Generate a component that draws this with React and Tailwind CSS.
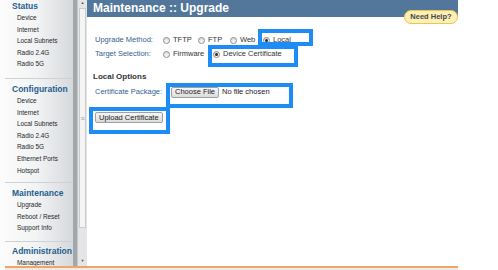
import React from 'react';

const sections = [
  { title: 'Status', items: ['Device', 'Internet', 'Local Subnets', 'Radio 2.4G', 'Radio 5G'], pt: 'pt-0', pb: 'pb-[8px] border-b' },
  { title: 'Configuration', items: ['Device', 'Internet', 'Local Subnets', 'Radio 2.4G', 'Radio 5G', 'Ethernet Ports', 'Hotspot'], pt: 'pt-[4px]', pb: 'pb-[6px] border-b' },
  { title: 'Maintenance', items: ['Upgrade', 'Reboot / Reset', 'Support Info'], pt: 'pt-[4px]', pb: 'pb-[7px] border-b' },
  { title: 'Administration', items: ['Management'], pt: 'pt-[3px]', pb: 'pb-0' },
];

const Radio = ({ checked }) => (
  <span className="flex items-center justify-center w-[7px] h-[7px] rounded-full border border-[#8c8c8c] bg-linear-to-b from-[#d8d8d8] to-white shrink-0">
    {checked && <span className="w-[3px] h-[3px] rounded-full bg-[#2a2a2a]" />}
  </span>
);

const Option = ({ label, checked, width }) => (
  <span className={`flex items-center gap-[3px] ${width}`}>
    <Radio checked={checked} />
    <span>{label}</span>
  </span>
);

const Button = ({ children }) => (
  <span className="flex items-center h-[11px] px-[3px] rounded-[2px] border border-[#a0a0a0] bg-linear-to-b from-[#f6f6f6] to-[#dcdcdc] text-[#222] text-[7.5px] leading-none">
    {children}
  </span>
);

const Sidebar = () => (
  <div className="w-[73px] h-full overflow-hidden bg-linear-to-r from-[#fcfcfc] via-[#f2f3f4] to-[#d6d9dc]">
    {sections.map((s) => (
      <div key={s.title} className={`${s.pt} ${s.pb} ml-[5px] border-[#cfd2d5]`}>
        <div className="h-[12px] leading-[12px] pl-[7px] text-[8.5px] font-bold text-[#1f5e8e]">{s.title}</div>
        {s.items.map((it) => (
          <div key={it} className="h-[11.6px] leading-[11.6px] pl-[12px] text-[6.4px] text-[#262626] font-medium whitespace-nowrap">
            {it}
          </div>
        ))}
      </div>
    ))}
  </div>
);

const Scrollbar = () => (
  <div className="flex h-full">
    <div className="w-[4px] h-full bg-[#a3a7ab]" />
    <div className="relative w-[10px] h-full bg-[#e4e5e6] border-l border-[#c4c6c8]">
      <div className="flex justify-center pt-[1px] text-[4px] text-[#555] leading-none">▲</div>
      <div className="absolute left-[1px] right-[1px] top-[8px] h-[220px] bg-[#f4f4f4] border border-[#c9cbcd] flex items-center justify-center">
        <span className="text-[7px] text-[#999] leading-none">≡</span>
      </div>
      <div className="absolute bottom-[3px] left-0 right-0 flex justify-center text-[4px] text-[#555] leading-none">▼</div>
    </div>
  </div>
);

const Highlight = ({ className }) => (
  <div className={`absolute border-[4px] border-[#1e8cf5] ${className}`} />
);

const Main = () => (
  <div className="relative flex-1 h-full bg-white">
    <div className="h-[17px] bg-[#53779a] pl-[6px] text-white font-bold text-[12px] leading-[17px]">
      Maintenance :: Upgrade
    </div>
    <div className="absolute right-0 top-[10px] w-[54px] h-[14px] rounded-full bg-[#fdf0b6] border border-[#efc54c] flex items-center justify-center text-[7.5px] font-bold text-[#444]">
      Need Help?
    </div>

    <div className="pl-[8px] pt-[16px] text-[7.5px]">
      <div className="flex items-center h-[14px]">
        <span className="w-[68px] text-[#33628f]">Upgrade Method:</span>
        <div className="flex items-center text-[#333]">
          <Option label="TFTP" width="w-[35px]" />
          <Option label="FTP" width="w-[32px]" />
          <Option label="Web" width="w-[33px]" />
          <Option label="Local" checked />
        </div>
      </div>
      <div className="flex items-center h-[14px]">
        <span className="w-[68px] text-[#33628f]">Target Selection:</span>
        <div className="flex items-center text-[#333]">
          <Option label="Firmware" width="w-[50px]" />
          <Option label="Device Certificate" checked />
        </div>
      </div>

      <div className="mt-[10px] -ml-[2px] h-[12px] leading-[12px] text-[8px] font-bold text-[#333]">Local Options</div>

      <div className="mt-[2px] flex items-center h-[14px]">
        <span className="w-[76px] text-[#33628f]">Certificate Package:</span>
        <Button>Choose File</Button>
        <span className="ml-[3px] text-[#222]">No file chosen</span>
      </div>

      <div className="mt-[13px] flex">
        <Button>Upload Certificate</Button>
      </div>
    </div>

    <Highlight className="left-[171px] top-[29px] w-[55px] h-[17px]" />
    <Highlight className="left-[121px] top-[45px] w-[90px] h-[22px]" />
    <Highlight className="left-[79px] top-[83px] w-[127px] h-[25px]" />
    <Highlight className="left-[2px] top-[107px] w-[81px] h-[27px]" />
  </div>
);

export default function App() {
  return (
    <div className="w-[498px] h-[270px] bg-white overflow-hidden font-['Liberation_Sans',Arial,sans-serif]">
      <div className="flex w-[458px] h-[266px]">
        <Sidebar />
        <Scrollbar />
        <Main />
      </div>
      <div className="ml-[5px] w-[453px] h-[2px] bg-[#f0a468]" />
      <div className="ml-[5px] w-[453px] h-[2px] bg-[#ececec]" />
    </div>
  );
}
